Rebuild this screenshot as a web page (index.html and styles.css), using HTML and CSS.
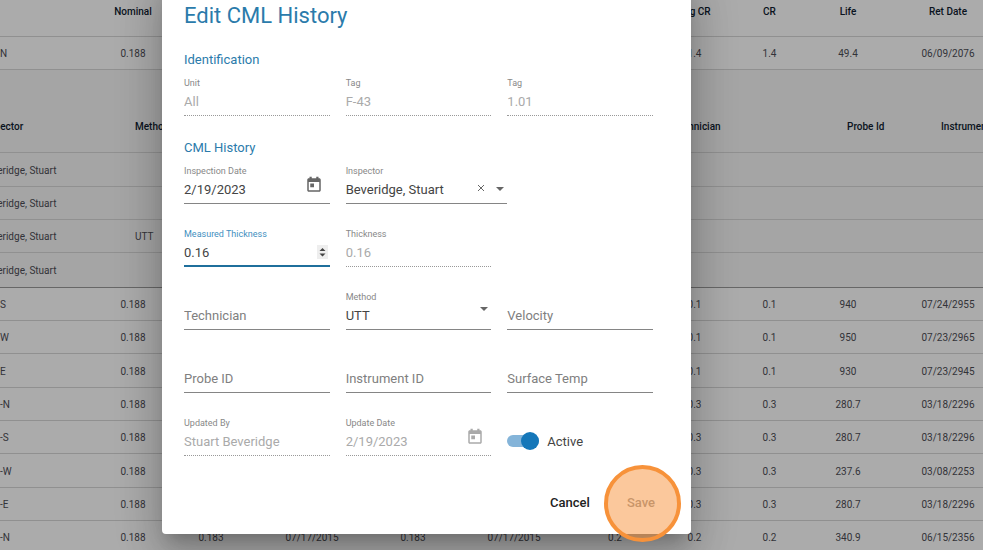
FILE: index.html
```html
<!DOCTYPE html>
<html lang="en">
<head>
<meta charset="utf-8">
<title>Edit CML History</title>
<link rel="stylesheet" href="styles.css">
</head>
<body>
<main class="page">
  <table class="grid">
    <colgroup>
      <col><col class="c-nominal"><col class="c-value"><col class="c-date"><col class="c-value"><col class="c-date"><col class="c-value"><col class="c-rate"><col class="c-rate"><col class="c-life"><col class="c-date">
    </colgroup>
    <thead>
      <tr><th></th><th>Nominal</th><th></th><th></th><th></th><th></th><th></th><th>Avg CR</th><th>CR</th><th>Life</th><th>Ret Date</th></tr>
    </thead>
    <tbody>
      <tr><td>N</td><td>0.188</td><td></td><td></td><td></td><td></td><td></td><td>1.4</td><td>1.4</td><td>49.4</td><td>06/09/2076</td></tr>
    </tbody>
  </table>
  <section class="detail">
    <table class="history">
      <colgroup><col class="h-inspector"><col class="h-method"><col class="h-technician"><col class="h-probe"><col></colgroup>
      <thead>
        <tr><th>Inspector</th><th>Method</th><th>Technician</th><th>Probe Id</th><th>Instrument</th></tr>
      </thead>
      <tbody>
        <tr><td>Beveridge, Stuart</td><td></td><td></td><td></td><td></td></tr>
        <tr><td>Beveridge, Stuart</td><td></td><td></td><td></td><td></td></tr>
        <tr><td>Beveridge, Stuart</td><td>UTT</td><td></td><td></td><td></td></tr>
        <tr><td>Beveridge, Stuart</td><td></td><td></td><td></td><td></td></tr>
      </tbody>
    </table>
  </section>
  <table class="grid">
    <colgroup>
      <col><col class="c-nominal"><col class="c-value"><col class="c-date"><col class="c-value"><col class="c-date"><col class="c-value"><col class="c-rate"><col class="c-rate"><col class="c-life"><col class="c-date">
    </colgroup>
    <tbody>
      <tr><td>S</td><td>0.188</td><td></td><td></td><td></td><td></td><td></td><td>0.1</td><td>0.1</td><td>940</td><td>07/24/2955</td></tr>
      <tr><td>W</td><td>0.188</td><td></td><td></td><td></td><td></td><td></td><td>0.1</td><td>0.1</td><td>950</td><td>07/23/2965</td></tr>
      <tr><td>E</td><td>0.188</td><td></td><td></td><td></td><td></td><td></td><td>0.1</td><td>0.1</td><td>930</td><td>07/23/2945</td></tr>
      <tr><td>-N</td><td>0.188</td><td></td><td></td><td></td><td></td><td></td><td>0.3</td><td>0.3</td><td>280.7</td><td>03/18/2296</td></tr>
      <tr><td>-S</td><td>0.188</td><td></td><td></td><td></td><td></td><td></td><td>0.3</td><td>0.3</td><td>280.7</td><td>03/18/2296</td></tr>
      <tr><td>-W</td><td>0.188</td><td></td><td></td><td></td><td></td><td></td><td>0.3</td><td>0.3</td><td>237.6</td><td>03/08/2253</td></tr>
      <tr><td>-E</td><td>0.188</td><td></td><td></td><td></td><td></td><td></td><td>0.3</td><td>0.3</td><td>280.7</td><td>03/18/2296</td></tr>
      <tr><td>-N</td><td>0.188</td><td>0.183</td><td>07/17/2015</td><td>0.183</td><td>07/17/2015</td><td>0.2</td><td>0.2</td><td>0.2</td><td>340.9</td><td>06/15/2356</td></tr>
    </tbody>
  </table>
</main>

<div class="overlay">
  <form class="dialog" role="dialog" aria-labelledby="dialog-title">
    <h1 id="dialog-title">Edit CML History</h1>

    <h2>Identification</h2>
    <div class="fields">
      <div class="field disabled"><label for="unit">Unit</label><div class="control"><input id="unit" value="All" disabled></div></div>
      <div class="field disabled"><label for="tag">Tag</label><div class="control"><input id="tag" value="F-43" disabled></div></div>
      <div class="field disabled"><label for="tag2">Tag</label><div class="control"><input id="tag2" value="1.01" disabled></div></div>
    </div>

    <h2>CML History</h2>
    <div class="fields">
      <div class="field"><label for="inspection">Inspection Date</label>
        <div class="control"><input id="inspection" value="2/19/2023">
          <button type="button" class="icon calendar" aria-label="Open calendar"><svg viewBox="0 0 24 24" width="18" height="18"><path d="M19 3h-1V1h-3v2H9V1H6v2H5c-1.100 0-2 .9-2 2v14c0 1.100.9 2 2 2h14c1.100 0 2-.9 2-2V5c0-1.100-.9-2-2-2zm0 16H5V8h14v11zM7 10h5v5H7z"/></svg></button>
        </div>
      </div>
      <div class="field wide"><label for="inspector">Inspector</label>
        <div class="control"><select id="inspector"><option>Beveridge, Stuart</option></select>
          <button type="button" class="icon clear" aria-label="Clear inspector"><svg viewBox="0 0 8 8" width="8" height="8"><path d="M1 1l6 6M7 1L1 7"/></svg></button>
          <svg class="caret" viewBox="0 0 8 4" width="8" height="4"><path d="M0 0h8L4 4z"/></svg>
        </div>
      </div>
      <div class="field focused first"><label for="measured">Measured Thickness</label>
        <div class="control"><input id="measured" type="number" step="0.01" value="0.16">
          <span class="spinner"><svg viewBox="0 0 11 14" width="11" height="14"><path d="M2.500 6L5.500 3l3 3zM2.500 8.500h6l-3 3z"/></svg></span>
        </div>
      </div>
      <div class="field disabled"><label for="thickness">Thickness</label><div class="control"><input id="thickness" value="0.16" disabled></div></div>
      <div class="field first"><div class="control"><input aria-label="Technician" placeholder="Technician"></div></div>
      <div class="field"><label for="method">Method</label>
        <div class="control"><select id="method"><option>UTT</option></select>
          <svg class="caret raised" viewBox="0 0 8 4" width="8" height="4"><path d="M0 0h8L4 4z"/></svg>
        </div>
      </div>
      <div class="field"><div class="control"><input aria-label="Velocity" placeholder="Velocity"></div></div>
      <div class="field"><div class="control"><input aria-label="Probe ID" placeholder="Probe ID"></div></div>
      <div class="field"><div class="control"><input aria-label="Instrument ID" placeholder="Instrument ID"></div></div>
      <div class="field"><div class="control"><input aria-label="Surface Temp" placeholder="Surface Temp"></div></div>
      <div class="field disabled"><label for="updatedby">Updated By</label><div class="control"><input id="updatedby" value="Stuart Beveridge" disabled></div></div>
      <div class="field disabled"><label for="updated">Update Date</label>
        <div class="control"><input id="updated" value="2/19/2023" disabled>
          <button type="button" class="icon calendar" aria-label="Open calendar" disabled><svg viewBox="0 0 24 24" width="18" height="18"><path d="M19 3h-1V1h-3v2H9V1H6v2H5c-1.100 0-2 .9-2 2v14c0 1.100.9 2 2 2h14c1.100 0 2-.9 2-2V5c0-1.100-.9-2-2-2zm0 16H5V8h14v11zM7 10h5v5H7z"/></svg></button>
        </div>
      </div>
      <label class="toggle"><input type="checkbox" role="switch" checked>Active</label>
    </div>

    <div class="actions">
      <button type="button">Cancel</button>
      <button type="submit" class="save" disabled>Save<span class="marker"></span></button>
    </div>
  </form>
</div>
</body>
</html>
```

FILE: styles.css
```css
* {
  box-sizing: border-box;
}

body {
  margin: 0;
  height: 100vh;
  overflow: hidden;
  position: relative;
  font-family: Roboto, "Liberation Sans", sans-serif;
  font-size: 13px;
  color: #444;
}

/* Data grid behind the dialog */
.page {
  overflow: hidden;
  height: 100%;
  background: #fdfdfd;
  font-size: 10px;
  line-height: 20px;
  color: #4c4c54;
}

table {
  table-layout: fixed;
  border-collapse: separate;
  border-spacing: 0;
  white-space: nowrap;
}

th,
td {
  padding: 2px 0 0;
  height: 33px;
  text-align: center;
  border-bottom: 1px solid #d4d4d4;
}

th {
  color: #101c30;
  font-weight: 500;
}

.grid {
  width: calc(100% + 24px);
}

.grid td:first-child {
  text-align: left;
}

.grid th {
  height: 37px;
  padding-bottom: 14px;
}

.grid tr:nth-child(3n) td {
  height: 34px;
}

.c-nominal { width: 72px; }
.c-value { width: 84px; }
.c-date { width: 118px; }
.c-rate { width: 75px; }
.c-life { width: 82px; }

.detail {
  padding-top: 30px;
  background: #f3f3f3;
  border-bottom: 1px solid #999;
}

.history {
  width: calc(100% + 19px);
  margin-left: -19px;
}

.history th,
.history td {
  text-align: left;
}

.history th {
  height: 53px;
}

.history tr:first-child td,
.history tr:last-child td {
  height: 34px;
}

.history tr:last-child td {
  border-bottom: 0;
}

.h-inspector { width: 154px; }
.h-method { width: 537px; }
.h-technician { width: 175px; }
.h-probe { width: 94px; }

/* Dialog */
.overlay {
  position: absolute;
  inset: 0;
  display: flex;
  align-items: flex-start;
  overflow: hidden;
  background: rgba(0, 0, 0, 0.32);
}

.dialog {
  flex: 0 1 529px;
  margin: -22px 0 0 162px;
  padding: 24px 38px 14px 22px;
  background: #fff;
  border-radius: 4px;
  box-shadow: 0 11px 15px -7px rgba(0, 0, 0, 0.2), 0 24px 38px 3px rgba(0, 0, 0, 0.14), 0 9px 46px 8px rgba(0, 0, 0, 0.12);
}

h1,
h2 {
  margin: 0;
  font-weight: 400;
  color: #2b7bab;
}

h1 {
  margin-bottom: 20px;
  font-size: 22px;
  line-height: 28px;
}

h2 {
  margin-bottom: 7px;
  font-size: 13px;
  line-height: 20px;
}

.fields {
  display: grid;
  grid-template-columns: repeat(3, minmax(0, 1fr));
  gap: 24px 16px;
}

.fields + h2 {
  margin-top: 22px;
}

.first {
  grid-column-start: 1;
}

.field {
  display: flex;
  flex-direction: column;
  justify-content: flex-end;
  height: 39px;
  border-bottom: 1px solid #858585;
}

.wide {
  margin-right: -16px;
}

.field label {
  font-size: 9px;
  line-height: 12px;
  color: #888;
}

.control {
  display: flex;
  align-items: center;
  height: 26px;
  padding-bottom: 2px;
}

.control input,
.control select {
  flex: 1;
  min-width: 0;
  height: 24px;
  padding: 0;
  border: 0;
  outline: 0;
  background: none;
  appearance: none;
  font: inherit;
  color: #444;
}

input[type="number"] {
  -moz-appearance: textfield;
}

input[type="number"]::-webkit-inner-spin-button {
  display: none;
}

.control input::placeholder {
  color: #808080;
  opacity: 1;
}

.disabled {
  border-bottom: 1px dotted #999;
}

.disabled .control input {
  color: #aaa;
}

.focused {
  border-bottom: 2px solid #1f6f9c;
}

.focused label {
  color: #3f8fc0;
}

.focused .control {
  height: 25px;
  padding-bottom: 1px;
}

.icon {
  display: flex;
  padding: 0;
  border: 0;
  background: none;
  fill: #666;
}

.calendar {
  margin: 0 7px 8px 0;
}

.disabled .icon {
  fill: #aaa;
}

.clear {
  margin: 0 11px 2px 0;
  fill: none;
  stroke: #666;
}

.caret {
  margin-right: 3px;
  fill: #666;
}

.raised {
  margin-bottom: 12px;
}

.spinner {
  display: flex;
  margin-right: 2px;
  background: #eee;
  fill: #444;
}

.toggle {
  display: flex;
  align-items: center;
  gap: 8px;
  height: 18px;
  margin-top: 15px;
}

.toggle input {
  appearance: none;
  display: flex;
  align-items: center;
  justify-content: flex-end;
  width: 32px;
  height: 12px;
  margin: 0;
  border-radius: 6px;
  background: #84b4d9;
}

.toggle input::before {
  content: "";
  width: 18px;
  height: 18px;
  border-radius: 50%;
  background: #1577b9;
}

.actions {
  display: flex;
  justify-content: flex-end;
  gap: 5px;
  margin: 28px -18px 0 0;
}

.actions button {
  position: relative;
  height: 36px;
  padding: 0 16px;
  border: 0;
  border-radius: 4px;
  background: none;
  font: inherit;
  font-weight: 500;
  color: #222;
}

.actions .save {
  color: #999;
}

.marker {
  position: absolute;
  top: -19px;
  left: -7px;
  width: 77px;
  height: 77px;
  border: 4px solid #f7923a;
  border-radius: 50%;
  background: rgba(247, 146, 58, 0.5);
}
```
